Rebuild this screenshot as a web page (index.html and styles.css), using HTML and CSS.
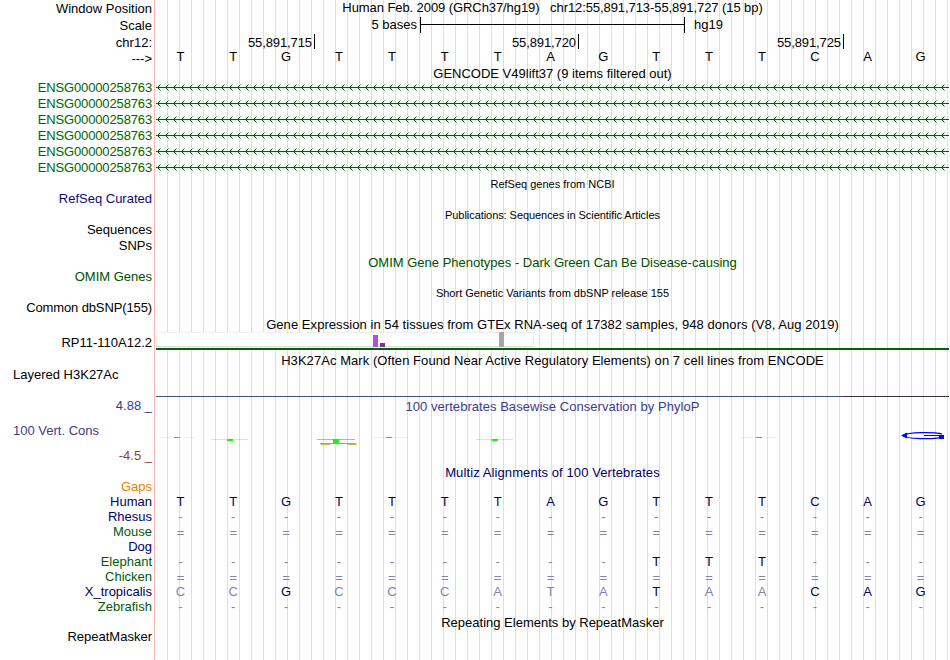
FILE: index.html
```html
<!DOCTYPE html>
<html lang="en">

<head>
    <meta charset="UTF-8">
    <meta name="viewport" content="width=device-width, initial-scale=1.0">
    <title>chr12:55,891,713-55,891,727 - Genome Browser</title>
    <link rel="stylesheet" href="styles.css">
</head>

<body>
    <div class="browser">
        <div class="row position">
            <div class="label">Window Position</div>
            <div class="title t-window">Human Feb. 2009 (GRCh37/hg19) &nbsp; chr12:55,891,713-55,891,727 (15 bp)</div>
        </div>
        <div class="row scale">
            <div class="label">Scale</div>
            <div class="data scale-data">
                <span class="scale-size">5 bases</span>
                <svg class="scale-bar" width="265" height="16"><path d="M0.5 0V16M264.5 0V16M0 7.5H265" stroke="#000" /></svg>
                <span>hg19</span>
            </div>
        </div>
        <div class="row ruler">
            <div class="label">chr12:</div>
            <div class="data ruler-data">
                <div class="tick first">55,891,715</div>
                <div class="tick">55,891,720</div>
                <div class="tick last">55,891,725</div>
            </div>
        </div>
        <div class="row strand">
            <div class="label">---&gt;</div>
            <div class="data bases" data-seq="TTGTTTTAGTTTCAG"></div>
        </div>

        <div class="row gencode-head"><div class="title">GENCODE V49lift37 (9 items filtered out)</div></div>
        <div id="genes"></div>

        <div class="row head small"><div class="title">RefSeq genes from NCBI</div></div>
        <div class="row"><div class="label refseq">RefSeq Curated</div></div>
        <div class="row head small"><div class="title t-pubs">Publications: Sequences in Scientific Articles</div></div>
        <div class="row"><div class="label">Sequences</div></div>
        <div class="row"><div class="label">SNPs</div></div>
        <div class="row head down"><div class="title omim">OMIM Gene Phenotypes - Dark Green Can Be Disease-causing</div></div>
        <div class="row"><div class="label omim">OMIM Genes</div></div>
        <div class="row head small"><div class="title">Short Genetic Variants from dbSNP release 155</div></div>
        <div class="row"><div class="label dbsnp">Common dbSNP(155)</div></div>
        <div class="row down"><div class="title t-wide">Gene Expression in 54 tissues from GTEx RNA-seq of 17382 samples, 948 donors (V8, Aug 2019)</div></div>

        <div class="row gtex">
            <div class="label">RP11-110A12.2</div>
            <svg class="data" width="793" height="18" shape-rendering="crispEdges">
                <rect width="378" height="16" fill="#f0f0f0" />
                <rect x="1" y="1" width="376" height="13" fill="#fff" />
                <rect y="14" width="378" height="1" fill="#dcdcdc" />
                <rect x="217" y="3" width="5" height="12" fill="#b452cd" />
                <rect x="224" y="11" width="5" height="4" fill="#7a378b" />
                <rect x="343" width="5" height="15" fill="#a6a6a6" />
                <rect y="16" width="793" height="2" fill="#006400" />
            </svg>
        </div>

        <div class="row h3k-head"><div class="title t-wide">H3K27Ac Mark (Often Found Near Active Regulatory Elements) on 7 cell lines from ENCODE</div></div>
        <div class="row h3k">
            <div class="label left">Layered H3K27Ac</div>
            <div class="data signal"></div>
        </div>

        <div class="row cons">
            <div class="cons-labels">
                <div class="label phylop">4.88 _</div>
                <div class="label left phylop">100 Vert. Cons</div>
                <div class="label neg">-4.5 _</div>
            </div>
            <div class="data">
                <div class="title phylop t-phylop">100 vertebrates Basewise Conservation by PhyloP</div>
                <svg class="logo" width="793" height="16">
                    <g shape-rendering="crispEdges" fill="#00ff00">
                        <path d="M3 7h36v1H3zM215 7h36v1h-36zM585 7h36v1h-36z" opacity=".15" />
                        <path d="M55 9h37v1H55zM320 9h37v1h-37z" opacity=".3" />
                        <path d="M161 9h38v1h-38z" opacity=".7" />
                        <path d="M18 7h6v1h-6zM230 7h6v1h-6zM600 7h6v1h-6z" fill="#00e614" />
                        <path d="M71 9h6v2h-6zM336 9h6v2h-6zM177 9h6v4h-6z" />
                    </g>
                    <path d="M164 13.5H200" stroke="#f08060" />
                    <path d="M165 14.5H174M191 14.5H201" stroke="#c8b450" />
                    <path d="M786 3.8C778 2 752 1.8 747 5.5C750 9.3 777 9.2 786 7.4" fill="none" stroke="#0000ff" stroke-width="1.2" />
                    <path d="M745 5.5L751 2.6V8.4ZM783 6H788V9H783ZM768 5H788V6H768Z" fill="#0000ff" />
                </svg>
            </div>
        </div>

        <div class="row head down"><div class="title multiz t-multiz">Multiz Alignments of 100 Vertebrates</div></div>
        <div class="alignment">
            <div class="row"><div class="label gaps">Gaps</div></div>
            <div class="row"><div class="label multiz">Human</div><div class="data bases" data-seq="TTGTTTTAGTTTCAG"></div></div>
            <div class="row"><div class="label multiz">Rhesus</div><div class="data bases" data-seq="---------------"></div></div>
            <div class="row"><div class="label green">Mouse</div><div class="data bases unaligned" data-seq="==============="></div></div>
            <div class="row"><div class="label multiz">Dog</div></div>
            <div class="row"><div class="label green">Elephant</div><div class="data bases" data-seq="---------TTT---"></div></div>
            <div class="row"><div class="label green">Chicken</div><div class="data bases unaligned" data-seq="==============="></div></div>
            <div class="row"><div class="label multiz">X_tropicalis</div><div class="data bases" data-seq="CCGCCCATATAACAG"></div></div>
            <div class="row"><div class="label green">Zebrafish</div><div class="data bases" data-seq="---------------"></div></div>
        </div>
        <div class="row head down"><div class="title">Repeating Elements by RepeatMasker</div></div>
        <div class="row"><div class="label">RepeatMasker</div></div>
    </div>

    <script>
        const human = 'TTGTTTTAGTTTCAG';

        // one cell per base, dimmed where it differs from human
        document.querySelectorAll('.bases').forEach(row => {
            [...row.dataset.seq].forEach((base, i) => {
                const cell = document.createElement('span');
                cell.textContent = base;
                if (base !== human[i]) {
                    cell.classList.add('mismatch');
                }
                row.appendChild(cell);
            });
        });

        // intron line with strand arrows every 8px
        let arrows = 'M0 7h793v1H0z';
        let tails = '';
        for (let x = 1; x < 793; x += 8) {
            arrows += `M${x + 1} 6h1v3h-1zM${x + 2} 5h1v1h-1zM${x + 2} 9h1v1h-1z`;
            tails += `M${x + 3} 4h1v1h-1zM${x + 3} 10h1v1h-1z`;
        }
        const genes = document.getElementById('genes');
        for (let i = 0; i < 6; i++) {
            genes.innerHTML += `<div class="row">
                <div class="label gene">ENSG00000258763</div>
                <svg class="data" width="793" height="16" fill="#006400" shape-rendering="crispEdges">
                    <path d="${arrows}" /><path d="${tails}" opacity=".5" />
                </svg>
            </div>`;
        }
    </script>
</body>

</html>
```

FILE: styles.css
```css
body {
    margin: 0;
    background: #fff;
    overflow: hidden;
}

.browser {
    box-sizing: border-box;
    width: 949px;
    height: 660px;
    font-family: "Liberation Sans", Arial, sans-serif;
    font-size: 13px;
    line-height: 15px;
    color: #000;
    white-space: nowrap;
    background:
        linear-gradient(#ffb4b4, #ffb4b4) 154px 0 / 1px 100% no-repeat,
        repeating-linear-gradient(to right, #dcdcf8 0, #dcdcf8 1px, transparent 1px, transparent 12px) 167px 0 no-repeat;
}

.row {
    display: flex;
    height: 16px;
}

.label {
    width: 152px;
    margin-right: 4px;
    flex-shrink: 0;
    text-align: right;
}

.label.left {
    box-sizing: border-box;
    padding-left: 13px;
    text-align: left;
}

.data {
    width: 793px;
    flex-shrink: 0;
}

.title {
    width: 793px;
    text-align: center;
}

.row > .title:first-child {
    margin-left: 156px;
}

.head {
    height: 15px;
}

.down {
    box-sizing: border-box;
    padding-top: 1px;
}

.small {
    font-size: 11px;
    line-height: 16px;
}

/* text fitting */
.t-window {
    letter-spacing: -0.08px;
}

.t-pubs {
    letter-spacing: -0.06px;
}

.t-wide {
    letter-spacing: 0.06px;
}

.t-phylop {
    letter-spacing: 0.04px;
}

.t-multiz {
    letter-spacing: 0.1px;
}

.dbsnp {
    letter-spacing: -0.12px;
}

/* header rows */
.position,
.scale {
    height: 17px;
}

.position .label,
.scale .label,
.ruler .label {
    margin-top: 1px;
}

.scale-data {
    display: flex;
}

.scale-size {
    width: 261px;
    text-align: right;
}

.scale-bar {
    margin: 0 9px 0 3px;
}

.ruler {
    height: 15px;
}

.ruler-data {
    display: flex;
}

.tick {
    box-sizing: border-box;
    width: 264px;
    height: 15px;
    padding: 1px 2px 0 0;
    border-right: 1px solid #000;
    text-align: right;
    letter-spacing: -0.1px;
}

.tick.first {
    width: 159px;
}

.tick.last {
    width: 265px;
}

.strand {
    height: 17px;
}

.strand .label {
    margin-top: 2px;
}

.gencode-head {
    height: 14px;
}

.bases {
    display: grid;
    grid-template-columns: repeat(15, 1fr);
    margin-left: -2px;
    text-align: center;
}

/* tracks */
.gtex {
    height: 18px;
}

.gtex .label {
    margin-top: 3px;
}

.h3k-head {
    height: 14px;
    padding-top: 3px;
}

.h3k {
    height: 30px;
}

.signal {
    height: 29px;
    border-bottom: 1px solid;
    border-image: linear-gradient(to right, #3c5080 687px, #402840 687px) 1;
}

.cons {
    height: 67px;
}

.cons-labels {
    display: flex;
    flex-direction: column;
    gap: 10px;
    padding-top: 1px;
}

.cons .title {
    padding-top: 2px;
}

.logo {
    display: block;
    margin-top: 16px;
}

.alignment .row {
    height: 15px;
}

.alignment .bases {
    color: #000064;
}

.alignment .unaligned {
    padding-top: 1px;
}

.alignment .mismatch {
    color: #8282b4;
}

/* colours */
.gene {
    color: #006400;
    letter-spacing: -0.14px;
}

.refseq {
    color: #0c0c78;
}

.omim {
    color: #005000;
}

.phylop {
    color: #3c3c8c;
}

.neg {
    color: #8c3c3c;
}

.multiz {
    color: #000064;
}

.green {
    color: #005a0a;
}

.gaps {
    color: #e68200;
}
```
